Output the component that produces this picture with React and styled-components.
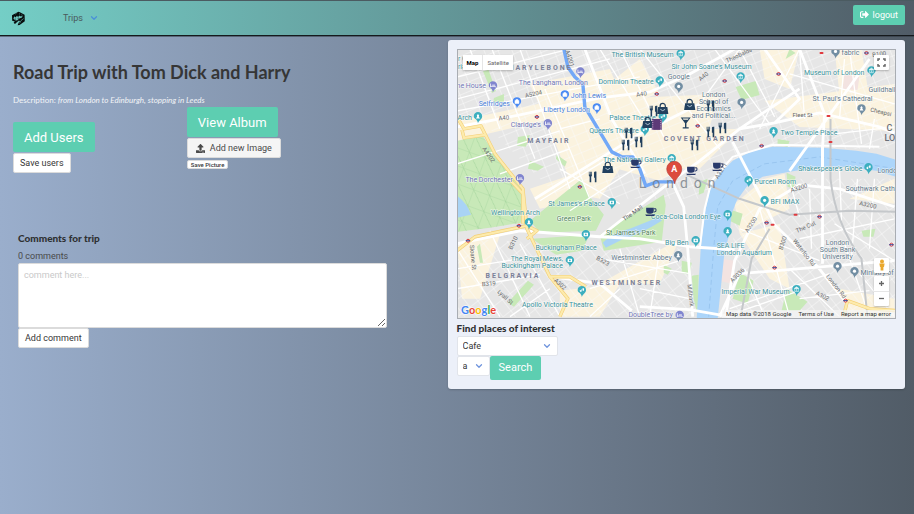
import React from "react";
import styled, { createGlobalStyle, css } from "styled-components";
import { FaUpload, FaSignOutAlt } from "react-icons/fa";
import { ChevronDown } from "lucide-react";

const GlobalStyle = createGlobalStyle`
  *, *::before, *::after { box-sizing: border-box; }
  body { margin: 0; font-family: Roboto, "Liberation Sans", sans-serif; color: #4a4a4a; }
  button, input, select, textarea { font-family: inherit; margin: 0; }
`;

const Page = styled.div`
  min-height: 100vh;
  background: linear-gradient(to right, #9aaecc, #515c67);
`;

const Navbar = styled.header`
  height: 36px;
  display: flex;
  align-items: center;
  padding: 0 9px 0 11px;
  background: linear-gradient(to right, #74cec6, #515c67);
  border-top: 1px solid #4b5b61;
  border-bottom: 1px solid #15191c;
  box-shadow: 0 1px 0 rgba(40, 48, 58, 0.5);
`;

const Logo = styled.a`
  display: flex;
  width: 52px;
`;

const NavLink = styled.a`
  display: flex;
  align-items: center;
  gap: 6px;
  font-size: 9px;
  line-height: 14px;
  color: #4a5a5c;
  text-decoration: none;

  svg { color: #4a90d9; }
`;

const tones = {
  primary: css`
    background: #5dceb1;
    border-color: transparent;
    color: #fff;
  `,
  plain: css`
    background: #fff;
    border-color: #dbdbdb;
    color: #363636;
  `,
};

const sizes = {
  large: css`height: 30px; padding: 0 10px; font-size: 13px;`,
  medium: css`height: 24px; padding: 0 8px; font-size: 11px;`,
  small: css`height: 20px; padding: 0 6px; font-size: 9px;`,
  tiny: css`height: 9px; padding: 0 3px; font-size: 6px; font-weight: 500;`,
};

const Button = styled.button`
  display: inline-flex;
  align-items: center;
  justify-content: center;
  gap: 4px;
  border: 1px solid;
  border-radius: 2px;
  white-space: nowrap;
  text-decoration: none;
  ${(p) => tones[p.$tone || "plain"]}
  ${(p) => sizes[p.$size || "small"]}
`;

const LogoutLink = styled(Button)`
  margin: 0 0 7px auto;
`;

const Columns = styled.main`
  display: grid;
  grid-template-columns: 19fr 20fr;
  align-items: start;
  padding: 4px 9px 16px 13px;
`;

const TripColumn = styled.section`
  padding-top: 20px;
`;

const Title = styled.h1`
  margin: 0;
  font: 700 18px/24px Lato, "Open Sans", sans-serif;
  color: #363636;
`;

const Description = styled.p`
  margin: 10px 0 0;
  font: 400 8px/13px Lato, "Open Sans", sans-serif;
  color: #f2f4f7;
`;

const Actions = styled.div`
  display: grid;
  grid-template-columns: 2fr 3fr;
  align-items: start;
`;

const ActionStack = styled.div`
  display: flex;
  flex-direction: column;
  align-items: flex-start;
  gap: 1px;
  padding-top: ${(p) => (p.$lowered ? "15px" : "0")};
`;

const FileLabel = styled.label`
  display: inline-flex;
  align-items: center;
  gap: 5px;
  height: 20px;
  padding: 0 8px;
  margin-bottom: 1px;
  border: 1px solid #dbdbdb;
  border-radius: 2px;
  background: #f5f5f5;
  font-size: 9px;
  white-space: nowrap;
`;

const FileInput = styled.input`
  position: absolute;
  width: 1px;
  height: 1px;
  opacity: 0;
`;

const Comments = styled.section`
  display: flex;
  flex-direction: column;
  align-items: flex-start;
  width: 86%;
  padding: 59px 0 0 5px;
`;

const Subtitle = styled.h2`
  margin: 0;
  font: 900 10px/13px Lato, "Open Sans", sans-serif;
  color: #2f3133;
`;

const CommentCount = styled.p`
  margin: 5px 0 0;
  font-size: 9px;
  line-height: 13px;
`;

const CommentBox = styled.textarea`
  width: 100%;
  height: 65px;
  padding: 5px;
  border: 1px solid #dbdbdb;
  border-radius: 2px;
  font-size: 9px;
  line-height: 13px;
  resize: vertical;

  &::placeholder { color: #c9c9c9; opacity: 1; }
`;

const Panel = styled.section`
  padding: 9px;
  border-radius: 3px;
  background: #ecf0f9;
  box-shadow: 0 1px 2px rgba(10, 10, 10, 0.2);
`;

const MapFrame = styled.div`
  position: relative;
  border: 1px solid #a9adb3;
  margin-bottom: 3px;
  overflow: hidden;
`;

const MapSvg = styled.svg`
  display: block;
  width: 100%;
  height: auto;
  font-family: Roboto, sans-serif;
`;

const MapTypes = styled.div`
  position: absolute;
  top: 5px;
  left: 5px;
  display: flex;
  background: #fff;
  box-shadow: 0 1px 2px rgba(0, 0, 0, 0.25);
`;

const MapType = styled.button`
  height: 15px;
  padding: 0 4px;
  border: 0;
  background: none;
  font: ${(p) => (p.$active ? 700 : 400)} 6px/15px Roboto, sans-serif;
  color: ${(p) => (p.$active ? "#000" : "#666")};

  & + & { border-left: 1px solid #e6e6e6; }
`;

const MapCorner = styled.div`
  position: absolute;
  right: 6px;
  ${(p) => (p.$top ? "top: 5px;" : "bottom: 12px;")}
  display: flex;
  flex-direction: column;
  gap: ${(p) => (p.$top ? "0" : "3px")};
`;

const MapControls = styled.div`
  display: flex;
  flex-direction: column;
  border-radius: 1px;
  background: #fff;
  box-shadow: 0 1px 2px rgba(0, 0, 0, 0.25);
`;

const MapControl = styled.button`
  display: flex;
  align-items: center;
  justify-content: center;
  width: 15px;
  height: 15px;
  padding: 0;
  border: 0;
  background: none;
  color: #666;

  & + & { border-top: 1px solid #e6e6e6; }
`;

const MapCredits = styled.div`
  position: absolute;
  right: 0;
  bottom: 0;
  display: flex;
  gap: 7px;
  padding: 0 4px;
  background: rgba(245, 245, 245, 0.7);
  font: 400 6px/8px Roboto, sans-serif;
  color: #333;

  a { color: inherit; text-decoration: none; }
`;

const SearchForm = styled.form`
  display: flex;
  flex-wrap: wrap;
  align-items: flex-start;
`;

const FormTitle = styled(Subtitle)`
  flex: 0 0 100%;
  margin-bottom: 1px;
`;

const Row = styled.div`
  flex: 0 0 100%;
  display: flex;
`;

const SelectWrap = styled.label`
  position: relative;
  display: block;
  width: ${(p) => (p.$narrow ? "33px" : "101px")};

  svg {
    position: absolute;
    top: 5px;
    right: 6px;
    color: #6f94dd;
    pointer-events: none;
  }
`;

const Select = styled.select`
  appearance: none;
  display: block;
  width: 100%;
  height: 20px;
  padding: 0 5px;
  border: 1px solid #e1e4ea;
  border-radius: 2px;
  background: #fff;
  color: #363636;
  font-size: 9px;
`;

const TEAL = "#3b929b";
const INDIGO = "#7076b5";
const BLUE = "#4a80d8";
const SLATE = "#62798a";
const GREY = "#6f7780";

const pins = [
  [580.5, 74, "#8085cf", "bed"], [493, 88, "#8085cf", "bed"], [517, 104, "#4a8af4", "bag"],
  [565, 97, "#4a8af4", "bag"], [597, 110, "#4a8af4", "bag"], [478, 119, "#3cafbf", "spot"],
  [548, 126, "#8085cf", "bed"], [520, 181, "#8085cf", "bed"], [681, 56, "#3cafbf", "museum"],
  [741, 79, "#3cafbf", "museum"], [660, 83, "#3cafbf", "show"], [679, 89, "#728ea3", "dot"],
  [742, 105, "#728ea3", "dot"], [836, 54, "#728ea3", "dot"], [872, 73, "#3cafbf", "museum"],
  [862, 111, "#728ea3", "spot"], [774, 134, "#3cafbf", "spot"], [869, 170, "#3cafbf", "show"],
  [749, 183, "#3cafbf", "show"], [765, 203, "#3cafbf", "dot"], [663, 119, "#3cafbf", "show"],
  [645, 132, "#3cafbf", "show"], [672, 161, "#3cafbf", "museum"], [612, 205, "#3cafbf", "camera"],
  [529, 225, "#3cafbf", "spot"], [586, 237, "#3cafbf", "camera"], [570, 263, "#3cafbf", "camera"],
  [582, 293, "#3cafbf", "show"], [728, 217, "#3cafbf", "camera"], [728, 234, "#3cafbf", "spot"],
  [696, 243, "#3cafbf", "camera"], [678.5, 258, "#728ea3", "spot"], [838, 269, "#728ea3", "dot"],
  [855, 274, "#728ea3", "dot"], [797, 292, "#3cafbf", "museum"], [680, 318, "#8085cf", "bed"],
];

/* x, baseline, text, colour, anchor */
const labels = [
  [588, 86, "The Langham, London", INDIGO, "end"], [486, 89, "ne House", INDIGO, "end"],
  [510, 107, "Selfridges", BLUE, "end"], [571, 99, "John Lewis", BLUE, "start"],
  [590, 113, "Liberty London", BLUE, "end"], [472, 121, "Arch", TEAL, "end"],
  [541, 128, "Claridge's", INDIGO, "end"], [513, 183, "The Dorchester", INDIGO, "end"],
  [458, 62, "r C", TEAL, "start"], [458, 70, "ria", TEAL, "start"],
  [674, 58, "The British Museum", TEAL, "end"], [752, 70, "Sir John Soane's Museum", TEAL, "end"],
  [654, 85, "Dominion Theatre", TEAL, "end"], [679, 80, "Google", SLATE, "middle"],
  [714, 98, "London", SLATE, "middle"], [714, 105, "School of", SLATE, "middle"],
  [714, 112, "Economics", SLATE, "middle"], [714, 119, "and Political...", SLATE, "middle"],
  [656, 121, "Palace Theatre", TEAL, "end"], [639, 134, "Queen's Theatre", TEAL, "end"],
  [666, 163, "The National Gallery", TEAL, "end"], [842, 56, "fabric", SLATE, "start"],
  [865, 76, "Museum of London", TEAL, "end"], [869, 93, "Guildhall", SLATE, "start"],
  [843, 102, "St. Paul's Cathedral", SLATE, "middle"], [781, 136, "Two Temple Place", TEAL, "start"],
  [863, 172, "Shakespeare's Globe", TEAL, "end"], [878, 174, "Londo", SLATE, "start"],
  [755, 185, "Purcell Room", TEAL, "start"], [846, 192, "Southwark Cath", SLATE, "start"],
  [771, 205, "BFI IMAX", TEAL, "start"], [605, 207, "St James's Palace", TEAL, "end"],
  [540, 216, "Wellington Arch", TEAL, "end"], [574, 222, "Green Park", "#51835c", "middle"],
  [597, 251, "Buckingham Palace", TEAL, "end"], [631, 236, "St James's Park", "#51835c", "middle"],
  [563, 262, "The Royal Mews,", TEAL, "end"], [563, 269, "Buckingham Palace", TEAL, "end"],
  [593, 308, "Apollo Victoria Theatre", TEAL, "end"], [721, 220, "Coca-Cola London Eye", TEAL, "end"],
  [689, 246, "Big Ben", TEAL, "end"], [672, 261, "Westminster Abbey", SLATE, "end"],
  [717, 249, "SEA LIFE", TEAL, "start"], [717, 256, "London Aquarium", TEAL, "start"],
  [838, 246, "London", SLATE, "middle"], [838, 253, "South Bank", SLATE, "middle"],
  [838, 260, "University", SLATE, "middle"], [861, 276, "Ministry of", SLATE, "start"],
  [790, 295, "Imperial War Museum", TEAL, "end"], [673, 318, "DoubleTree by", INDIGO, "end"],
];

const roadNames = [
  [534, 97, "A5204", -12], [504, 121, "A40", -6], [487, 157, "A4202", 55], [642, 97, "A40", -8],
  [705, 79, "A40", -38], [740, 58, "Theobalds", -25], [803, 118, "Fleet St", 0],
  [881, 115, "Cheapsi", 13], [723, 173, "A3211", -58], [800, 191, "A3200", -18],
  [868, 208, "A3200", 12], [753, 227, "A3200", -58], [739, 278, "A3036", -45],
  [785, 245, "B300", -72], [807, 230, "The Cut", -24], [803, 255, "Waterloo Rd", 52],
  [835, 289, "London Rd", 52], [822, 299, "A302", 28], [634, 216, "The Mall", -35],
  [602, 264, "B323", 30], [559, 287, "A302", 42], [515, 245, "B310", -64],
  [471, 259, "Sloane St", 84], [489, 287, "B319", -4], [504, 300, "Lyall St", 42],
  [689, 297, "Millbank", 82], [880, 57, "B100", -8], [568, 60, "A4201", 72],
];

const districts = [
  [540, 71, "MARYLEBONE"], [549, 144, "MAYFAIR"], [705, 142, "COVENT GARDEN"],
  [513, 279, "BELGRAVIA"], [627, 286, "WESTMINSTER"],
];

const places = [
  [629, 134, "fork"], [626, 146, "fork"], [639, 143, "fork"], [654, 112, "fork"],
  [711, 107, "fork"], [711, 133, "fork"], [723, 129, "fork"], [695, 146, "fork"], [593, 178, "fork"],
  [663, 110, "shop"], [690, 106, "shop"], [648, 124, "shop"], [608, 169, "shop"],
  [657, 125, "film"], [686, 124, "glass"],
  [636, 165, "cup"], [692, 172, "cup"], [718, 168, "cup"], [651, 213, "cup"],
];

const stations = [
  [537, 118], [519, 227], [468, 242], [580, 188], [657, 95], [725, 82], [698, 127], [779, 75],
  [762, 147], [867, 54], [767, 224], [820, 218], [775, 269], [846, 302], [892, 246],
];
const railStops = [[822, 54], [829, 117], [831, 143], [796, 216], [773, 226]];

const minorRoads =
  "M457 78 570 50M457 100 610 60M457 112 640 78M457 165 560 132M470 50 500 130M492 50 535 160M520 50 570 190M545 90 590 200M560 130 600 120M600 50 650 130M620 50 665 140M640 50 720 150M560 170 620 205M500 175 570 150M540 202 640 140M570 212 650 160M715 50 770 125M740 50 775 118M700 105 740 50M760 130 800 50M790 75 895 105M800 50 805 120M850 50 862 145M875 120 870 150M835 135 895 128M845 60 840 120M500 318 457 250M490 232 530 318M520 245 560 318M457 270 520 260M457 290 540 276M550 290 510 318M620 250 640 318M600 260 690 275M640 290 690 300M590 318 620 290M660 250 650 318M590 290 680 262M760 210 790 318M740 230 820 262M790 182 800 218M810 190 812 250M840 170 842 222M858 180 852 260M875 180 870 250M800 240 895 220M835 225 895 262M845 245 870 318M730 310 830 275M725 318 800 292M745 270 765 318M800 300 870 292M860 275 895 318M790 270 840 318";

const mainRoads =
  "M457 128 520 116 600 99 650 93 690 75 735 50M585 50 612 120 645 175M535 200 575 175 640 135 700 105M672 182 700 162 740 130 762 115 800 90M740 130 775 124 820 114 880 128 895 134M800 50 825 115 823 149M672 182 684 208 688 250 693 318M457 245 520 232 600 238 640 240 690 248M600 238 672 182M765 50 800 100 775 124M690 248 735 251M733 143 765 205 775 226 818 268 845 302M823 168 823 265M726 318 735 262 760 210 800 186 840 190 895 208M720 318 740 275 895 262M640 308 690 311 730 318M552 278 600 285 632 312M790 172 870 60";

const ringRoads =
  "M457 118 464 130 481 127 495 155 523 190 527 230 550 278 570 278 586 288M457 252 475 238 527 227 537 232 527 240M462 131 464 139 485 136M550 278 568 300 560 318M509 180 523 195 523 225M844 318 848 302 870 310 897 312";

function Pin({ x, y, fill, kind }) {
  return (
    <g transform={`translate(${x} ${y})`}>
      <path d="M0 5.4C-1-0-4.2 2-4.2-1.6A4.2 4.2 0 1 1 4.2-1.6C4.2 1.6 1 2.4 0 5.4Z" fill={fill} />
      {kind === "bed" && <path d="M-2.4-3.4V.4M-2.4-.6H2.4V.4M-.8-1.8H2.2" stroke="#fff" strokeWidth=".8" fill="none" />}
      {kind === "bag" && <path d="M-2-2.4H2V.6H-2ZM-1-2.4V-3.4H1V-2.4" fill="#fff" stroke="#fff" strokeWidth=".5" />}
      {kind === "museum" && <path d="M-2.3-2.2 0-3.8 2.3-2.2ZM-1.8-1.6V.2M0-1.6V.2M1.8-1.6V.2M-2.3.7H2.3" fill="#fff" stroke="#fff" strokeWidth=".6" />}
      {kind === "show" && <path d="M-2.2-1.4C-1-1-.6-2.2-.2-3V-.4C-.8.8-1.8.4-2.2-1.4ZM2.2-3.4V-1.6C1.8-.4 1-.4.6-1.6V-3.4Z" fill="#fff" />}
      {kind === "camera" && <path d="M-2.2-3H2.2V.4H-2.2ZM-.9-1.3A.9.9 0 1 0 .9-1.3.9.9 0 1 0-.9-1.3Z" fill="#fff" fillRule="evenodd" />}
      {kind === "spot" && <path d="M0-3.8 1.2-2.4.8-1.4 2 .6H-2L-.8-1.4-1.2-2.4Z" fill="#fff" />}
      {kind === "dot" && <circle cy="-1.5" r="1.6" fill="#fff" />}
    </g>
  );
}

function Place({ x, y, kind }) {
  return (
    <g transform={`translate(${x} ${y})`} fill="#22405e">
      {kind === "fork" && (
        <path d="M-4-5.2H-3.3V-2.4H-2.8V-5.2H-2.1V-2.4H-1.6V-5.2H-.9V-1.2L-1.6-.2V5.4H-3.2V-.2L-4-1.2ZM1.2-4.2C1.2-5 2.4-5.4 3.6-5.2V5.4H2V.8H1.2Z" />
      )}
      {kind === "shop" && (
        <>
          <path d="M-4.6-1.8H4.6L5.6 5.2H-5.6Z" />
          <path d="M-2.6-1.4V-3A2.6 2.6 0 0 1 2.6-3V-1.4" fill="none" stroke="#22405e" strokeWidth="1.2" />
          <path d="M-2.4.4Q0 3.2 2.4.4" fill="none" stroke="#cfe0ea" strokeWidth=".8" />
        </>
      )}
      {kind === "film" && (
        <>
          <rect x="-5" y="-5" width="10" height="11" fill="#5d3a78" />
          <path d="M-4 -4V6M4 -4V6" stroke="#c9b6d6" strokeWidth="1" strokeDasharray="1 1.2" />
        </>
      )}
      {kind === "glass" && (
        <path d="M-5-5.4H5L.7.4V4.4H3V5.6H-3V4.4H-.7V.4ZM-3-4.3-2.2-3.2H2.2L3-4.3Z" fillRule="evenodd" />
      )}
      {kind === "cup" && (
        <>
          <path d="M-4.6-4H3V-1Q3 2-.2 2H-1.6Q-4.6 2-4.6-1ZM-5.6 2.8H4.4L3.4 4.2H-4.6Z" fill="#293a6b" />
          <path d="M3-3H5.2V-.4L3 .4" fill="none" stroke="#293a6b" strokeWidth="1" />
        </>
      )}
    </g>
  );
}

function CityMap() {
  return (
    <MapSvg viewBox="458 51 438 268" role="img" aria-label="Map of central London">
      <defs>
        <pattern id="blocks" width="13" height="9" patternUnits="userSpaceOnUse" patternTransform="rotate(-22)">
          <path d="M0 0H13M0 0V9" stroke="#fafafa" strokeWidth="1" />
        </pattern>
        <pattern id="blocksSouth" width="10" height="14" patternUnits="userSpaceOnUse" patternTransform="rotate(-38)">
          <path d="M0 0H10M0 0V14" stroke="#fafafa" strokeWidth="1" />
        </pattern>
        <pattern id="paths" width="17" height="17" patternUnits="userSpaceOnUse" patternTransform="rotate(20)">
          <path d="M0 0H17M0 0V17M0 0 17 17" stroke="#a4d49c" strokeWidth=".7" fill="none" />
        </pattern>
      </defs>
      <rect x="457" y="50" width="440" height="270" fill="#e6e6e6" />

      <g fill="#fbf3df">
        <path d="M457 122 600 92 640 60 660 95 560 118 457 142ZM530 85 610 70 640 140 600 200 575 195 550 130ZM610 100 720 95 700 160 660 182 600 165ZM700 130 740 130 700 170 680 170ZM765 102 895 85 895 132 800 128ZM835 50 862 50 870 100 840 95ZM460 145 475 150 470 160ZM530 190 575 175 590 200 540 210ZM457 245 500 236 480 300 462 300ZM600 285 680 240 660 285ZM560 292 620 285 600 318 560 318ZM735 205 765 180 785 175 790 210 740 235ZM740 235 780 225 790 290 770 280ZM760 50 800 50 790 90 765 80ZM850 200 895 180 895 205ZM840 290 895 300 895 318 850 318Z" />
      </g>
      <path d="M457 50H897V150H780L700 200 560 200 480 120 457 120Z" fill="url(#blocks)" />
      <path d="M457 240 690 250 700 318H457ZM740 180H897V320H725Z" fill="url(#blocksSouth)" />
      <path d="M845 75 860 78 858 91 843 90Z" fill="#f3e3e1" />
      <path d="M722 260 735 262 732 285 720 282Z" fill="#f3e3e1" />

      <g fill="#c8e9b8">
        <path d="M457 142 482 136 497 158 522 190 521 224 490 229 457 233Z" />
        <path d="M530 222 582 180 590 198 604 216 596 232 540 234ZM532 240 590 236 582 252 556 256Z" />
        <path d="M600 236 664 196 666 206 662 243 604 252Z" />
        <path d="M736 88 756 82 760 96 742 101ZM557 156 567 163 565 168 556 160ZM518 138 530 136 526 148 517 147ZM494 99 504 95 504 103 493 104ZM700 183 708 180 704 194 699 196ZM692 277 699 276 698 318 694 300ZM787 290 808 303 800 312 782 312ZM787 174 796 178 794 190 788 188ZM731 211 743 215 740 227 730 222ZM740 274 754 282 748 305 733 300ZM664 266 672 270 668 276 664 274ZM682 262 692 264 690 276 682 274ZM778 140 790 142 788 148 778 146ZM480 245 483 264 480 264 477 248ZM528 282 534 286 514 308 508 304ZM478 60 484 58 496 92 492 94ZM530 162 544 168 538 172 528 170ZM790 50 796 54 786 60ZM862 232 876 230 874 238 864 238Z" />
      </g>
      <path d="M457 142 482 136 497 158 522 190 521 224 490 229 457 233Z" fill="url(#paths)" />
      <path d="M457 197Q467 204 471 216L457 219ZM603 244Q612 234 630 230L660 218 662 222Q640 236 624 240L606 249Z" fill="#a9d3f5" />

      <path d={minorRoads} fill="none" stroke="#fff" strokeWidth="1.3" />
      <path d="M697 320 701 250 705 215 710 192 720 175 733 162 753 152 773 148 823 149 857 152 877 155 897 161V178L877 172 843 168 823 168 790 173 763 178 747 188 737 202 732 215 730 235 725 252 718 320Z" fill="#acd5fa" />
      <path d="M709 318 714 250 718 208 733 182 765 165 820 158 897 170" fill="none" stroke="#8cbbe8" strokeWidth=".6" strokeDasharray="5 3" />
      <path d={mainRoads} fill="none" stroke="#fff" strokeWidth="2.8" strokeLinejoin="round" />
      <path d="M823 146V172" stroke="#fff" strokeWidth="3" />
      <path d="M700 250 705 210 712 182 733 158 773 146 880 148" fill="none" stroke="#fff" strokeWidth="2" />
      <path d="M687 176 740 200 790 216 850 212 897 213M831 120 831 180Q836 225 862 260L868 318M741 318 752 260 770 230" fill="none" stroke="#c5c8cb" strokeWidth="2" />

      <g fill="none" strokeLinejoin="round">
        <path d={ringRoads} stroke="#f3cf75" strokeWidth="3.4" />
        <path d={ringRoads} stroke="#fdebad" strokeWidth="2.2" />
        <path d="M564 50 568 68 575 78 583 85 585 108 612 153 622 158 633 158 640 170 646 187 657 183 674 183" stroke="#72a8f7" strokeWidth="3.4" strokeLinecap="round" />
      </g>

      {stations.map(([x, y]) => (
        <g key={`${x}-${y}`}>
          <circle cx={x} cy={y} r="1.5" fill="#fff" stroke="#d9363e" strokeWidth="1" />
          <path d={`M${x - 2.3} ${y}H${x + 2.3}`} stroke="#2b4699" strokeWidth="1" />
        </g>
      ))}
      {railStops.map(([x, y]) => (
        <rect key={`${x}-${y}`} x={x - 2} y={y - 1} width="4" height="2" rx="1" fill="#e0393e" />
      ))}

      <g fontSize="6" fill="#67696b" textAnchor="middle">
        {roadNames.map(([x, y, text, angle]) => (
          <text key={`${x}-${y}`} transform={`translate(${x} ${y}) rotate(${angle})`}>{text}</text>
        ))}
      </g>

      <g fontSize="7" stroke="#fff" strokeOpacity=".7" strokeWidth="1.2" paintOrder="stroke">
        {labels.map(([x, y, text, fill, anchor]) => (
          <text key={`${x}-${y}`} x={x} y={y} fill={fill} textAnchor={anchor}>{text}</text>
        ))}
      </g>
      <g fontSize="7" fontWeight="700" letterSpacing="2" fill="#7b8199" textAnchor="middle">
        {districts.map(([x, y, text]) => (
          <text key={text} x={x} y={y}>{text}</text>
        ))}
      </g>
      <g fontSize="9" fontWeight="500" fill="#6a6f78">
        <text x="887" y="132">C</text>
        <text x="885" y="142">LO</text>
      </g>
      <text x="639" y="189" fontSize="14" letterSpacing="6" fill={GREY} fillOpacity=".75">London</text>

      {pins.map(([x, y, fill, kind]) => (
        <Pin key={`${x}-${y}`} x={x} y={y} fill={fill} kind={kind} />
      ))}
      {places.map(([x, y, kind]) => (
        <Place key={`${x}-${y}`} x={x} y={y} kind={kind} />
      ))}

      <path d="M675 185C674 178 667 177 667 170A7.5 7.5 0 0 1 682 170C682 177 676 178 675 185Z" fill="#dc4b3e" stroke="#b23a30" strokeWidth=".6" />
      <text x="674.5" y="173" fontSize="9" fontWeight="700" fill="#fff" textAnchor="middle">A</text>

      <g fontFamily="Lato, sans-serif" fontSize="11" fontWeight="700" stroke="#fff" strokeWidth="1" paintOrder="stroke">
        <text x="461" y="315">
          <tspan fill="#4285f4">G</tspan><tspan fill="#ea4335">o</tspan><tspan fill="#fbbc05">o</tspan><tspan fill="#4285f4">g</tspan><tspan fill="#34a853">l</tspan><tspan fill="#ea4335">e</tspan>
        </text>
      </g>
    </MapSvg>
  );
}

function BrandMark() {
  return (
    <svg width="15" height="15" viewBox="0 0 15 15" aria-hidden="true">
      <path d="M7.4.8 9.4 1.6 13.6 3.8 13.8 10.2 8.6 14 6.6 14.2 7.8 11.6 9 10.4 8 9.6 5.6 11.4 4 13 2.6 11.8 3.8 10.4 1.2 9.8 1 4.2Z" fill="#080d0e" />
      <path d="M2.4 7.6 3.4 5.2 4.4 6.4 6 4.8 7 6 8.6 4.4 9.8 5.6 11.6 4.8 11 6.6 8.4 7.6 6 9.4 4 9.2Z" fill="#6cc3bb" />
      <path d="M3.2 8.2 4.4 7.4 5 8.4ZM6.2 7.8 7.6 6.6 8.2 7.2ZM8.6 9.4 10 8.2" fill="#080d0e" />
      <path d="M8.6 12.4 10 9.6 12.6 7.6M4.4 3 5.4 2.6M8 2.6 9 3.2M10.4 3.8 11.4 4.2" fill="none" stroke="#6cc3bb" strokeWidth=".6" />
    </svg>
  );
}

export default function App() {
  return (
    <Page>
      <GlobalStyle />
      <Navbar>
        <Logo href="#home" aria-label="Home"><BrandMark /></Logo>
        <NavLink href="#trips">Trips <ChevronDown size={10} strokeWidth={3} /></NavLink>
        <LogoutLink as="a" href="#logout" $tone="primary">
          <FaSignOutAlt size={9} /> logout
        </LogoutLink>
      </Navbar>
      <Columns>
        <TripColumn>
          <Title>Road Trip with Tom Dick and Harry</Title>
          <Description>Description: <em>from London to Edinburgh, stopping in Leeds</em></Description>
          <Actions>
            <ActionStack $lowered>
              <Button $tone="primary" $size="large">Add Users</Button>
              <Button>Save users</Button>
            </ActionStack>
            <ActionStack>
              <Button $tone="primary" $size="large">View Album</Button>
              <FileLabel>
                <FileInput type="file" />
                <FaUpload size={9} /> Add new Image
              </FileLabel>
              <Button $size="tiny">Save Picture</Button>
            </ActionStack>
          </Actions>
          <Comments>
            <Subtitle>Comments for trip</Subtitle>
            <CommentCount>0 comments</CommentCount>
            <CommentBox aria-label="Comment" placeholder="comment here..." />
            <Button>Add comment</Button>
          </Comments>
        </TripColumn>
        <Panel>
          <MapFrame>
            <CityMap />
            <MapTypes>
              <MapType $active>Map</MapType>
              <MapType>Satellite</MapType>
            </MapTypes>
            <MapCorner $top>
              <MapControls>
                <MapControl aria-label="Full screen">
                  <svg width="9" height="9" viewBox="0 0 9 9" aria-hidden="true">
                    <path d="M1 3V1H3M6 1H8V3M8 6V8H6M3 8H1V6" fill="none" stroke="currentColor" strokeWidth="1.5" />
                  </svg>
                </MapControl>
              </MapControls>
            </MapCorner>
            <MapCorner>
              <MapControls>
                <MapControl aria-label="Street View">
                  <svg width="8" height="12" viewBox="0 0 8 12" aria-hidden="true">
                    <circle cx="4" cy="2.4" r="2" fill="#e9a82e" />
                    <path d="M1.4 4.6H6.6L6 8H5.4V11.4H2.6V8H2Z" fill="#e9a82e" />
                  </svg>
                </MapControl>
              </MapControls>
              <MapControls>
                <MapControl aria-label="Zoom in">
                  <svg width="7" height="7" viewBox="0 0 7 7" aria-hidden="true">
                    <path d="M3.5 1V6M1 3.5H6" stroke="currentColor" strokeWidth="1.3" />
                  </svg>
                </MapControl>
                <MapControl aria-label="Zoom out">
                  <svg width="7" height="7" viewBox="0 0 7 7" aria-hidden="true">
                    <path d="M1 3.5H6" stroke="currentColor" strokeWidth="1.3" />
                  </svg>
                </MapControl>
              </MapControls>
            </MapCorner>
            <MapCredits>
              <span>Map data ©2018 Google</span>
              <a href="#terms">Terms of Use</a>
              <a href="#report">Report a map error</a>
            </MapCredits>
          </MapFrame>
          <SearchForm onSubmit={(e) => e.preventDefault()}>
            <FormTitle>Find places of interest</FormTitle>
            <Row>
              <SelectWrap>
                <Select aria-label="Kind of place"><option>Cafe</option></Select>
                <ChevronDown size={10} strokeWidth={3} />
              </SelectWrap>
            </Row>
            <SelectWrap $narrow>
              <Select aria-label="Stop"><option>a</option></Select>
              <ChevronDown size={10} strokeWidth={3} />
            </SelectWrap>
            <Button type="submit" $tone="primary" $size="medium">Search</Button>
          </SearchForm>
        </Panel>
      </Columns>
    </Page>
  );
}
